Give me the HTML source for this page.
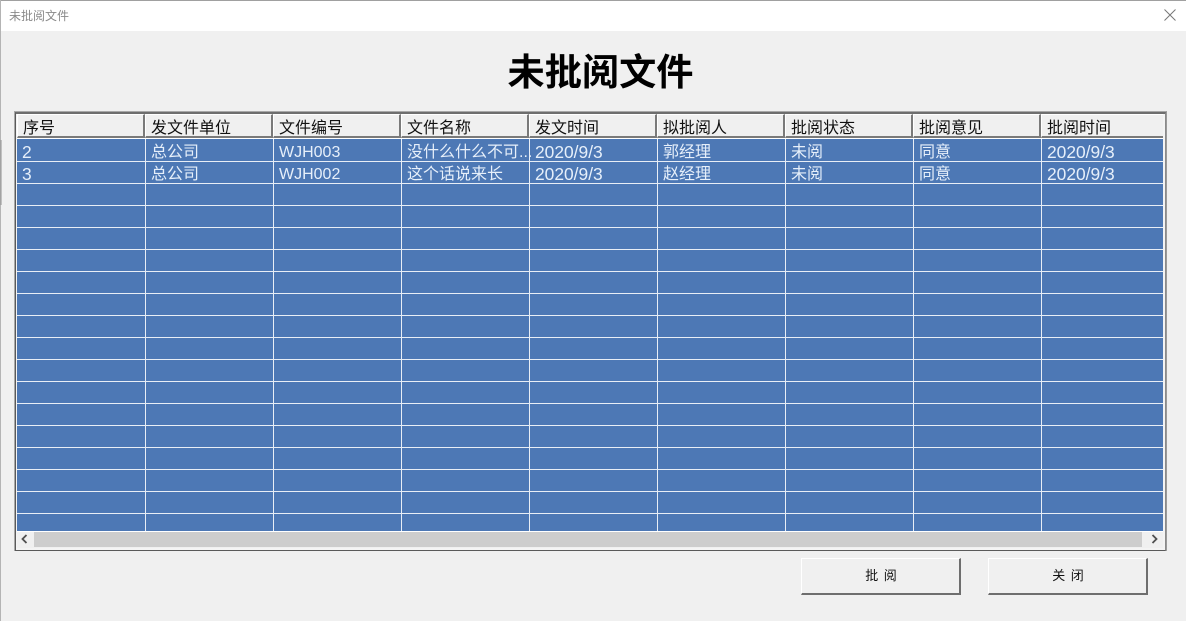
<!DOCTYPE html>
<html><head><meta charset="utf-8">
<style>
html,body{margin:0;padding:0;width:1186px;height:621px;overflow:hidden;background:#f0f0f0}
*{box-sizing:border-box}
body{position:relative;font-family:"Liberation Sans","Noto Sans CJK SC",sans-serif}
div{position:absolute}
.c{white-space:nowrap;font-size:16px;line-height:22px;height:22px}
.h{color:#111}
.d{color:#e6effa}
.t{font-size:17.4px;margin-top:-1px}
.hl{left:17px;width:1146px;height:1px;background:#e8eef6}
.vl{top:139px;width:1px;height:392px;background:#e8eef6}
.hc{top:114px;height:24px;background:#f0f0f0;border-right:2px solid #7a7a7a;border-bottom:2px solid #7a7a7a;border-left:1px solid #fff;border-top:1px solid #fff}
</style></head>
<body>
<!-- window chrome -->
<div style="left:0;top:0;width:1186px;height:1px;background:#a0a0a0"></div>
<div style="left:0;top:0;width:1px;height:621px;background:#b4b4b4"></div>
<div style="left:1px;top:1px;width:1185px;height:30px;background:#fff"></div>
<div class="c" style="left:9px;top:5px;font-size:12px;color:#8a8a8a">未批阅文件</div>
<svg style="position:absolute;left:1164px;top:9px" width="12" height="12" viewBox="0 0 12 12"><path d="M0.5 0.5L11.5 11.5M11.5 0.5L0.5 11.5" stroke="#777" stroke-width="1" fill="none"/></svg>
<div style="left:0;top:140px;width:2px;height:65px;background:#8f8f8f;opacity:.5"></div>
<!-- title -->
<div style="left:500px;top:47px;width:201px;text-align:center;font-size:37.2px;line-height:50px;font-weight:bold;color:#000;white-space:nowrap">未批阅文件</div>
<!-- grid frame -->
<div style="left:14px;top:111px;width:1153px;height:440px;background:#fff;border:1px solid #a8a8a8;border-right-color:#9a9a9a"></div>
<div style="left:15px;top:112px;width:1151px;height:439px;border:2px solid #6e6e6e;border-right:1px solid #8a8a8a;border-bottom:1px solid #5a5a5a;border-left:1px solid #5a5a5a;background:#f4f4f4"></div>
<div style="left:17px;top:139px;width:1146px;height:392px;background:#4d78b5"></div>
<!-- header cells -->
<div class="hc" style="left:17px;width:128px"></div>
<div class="hc" style="left:145px;width:128px"></div>
<div class="hc" style="left:273px;width:128px"></div>
<div class="hc" style="left:401px;width:128px"></div>
<div class="hc" style="left:529px;width:128px"></div>
<div class="hc" style="left:657px;width:128px"></div>
<div class="hc" style="left:785px;width:128px"></div>
<div class="hc" style="left:913px;width:128px"></div>
<div class="hc" style="left:1041px;width:122px;border-right:0"></div>
<div style="left:17px;top:138px;width:1146px;height:1px;background:#fff"></div>
<!-- header text -->
<div class="c h" style="left:23px;top:118px">序号</div>
<div class="c h" style="left:151px;top:118px">发文件单位</div>
<div class="c h" style="left:279px;top:118px">文件编号</div>
<div class="c h" style="left:407px;top:118px">文件名称</div>
<div class="c h" style="left:535px;top:118px">发文时间</div>
<div class="c h" style="left:663px;top:118px">拟批阅人</div>
<div class="c h" style="left:791px;top:118px">批阅状态</div>
<div class="c h" style="left:919px;top:118px">批阅意见</div>
<div class="c h" style="left:1047px;top:118px">批阅时间</div>
<!-- row lines -->
<div class="hl" style="top:161px"></div><div class="hl" style="top:183px"></div><div class="hl" style="top:205px"></div><div class="hl" style="top:227px"></div><div class="hl" style="top:249px"></div><div class="hl" style="top:271px"></div><div class="hl" style="top:293px"></div><div class="hl" style="top:315px"></div><div class="hl" style="top:337px"></div><div class="hl" style="top:359px"></div><div class="hl" style="top:381px"></div><div class="hl" style="top:403px"></div><div class="hl" style="top:425px"></div><div class="hl" style="top:447px"></div><div class="hl" style="top:469px"></div><div class="hl" style="top:491px"></div><div class="hl" style="top:513px"></div><div class="hl" style="top:531px;background:#fff"></div>
<!-- col lines -->
<div class="vl" style="left:145px"></div><div class="vl" style="left:273px"></div><div class="vl" style="left:401px"></div><div class="vl" style="left:529px"></div><div class="vl" style="left:657px"></div><div class="vl" style="left:785px"></div><div class="vl" style="left:913px"></div><div class="vl" style="left:1041px"></div>
<!-- row 1 -->
<div class="c d t" style="left:22px;top:142px">2</div>
<div class="c d" style="left:151px;top:142px">总公司</div>
<div class="c d" style="left:279px;top:142px">WJH003</div>
<div class="c d" style="left:407px;top:142px">没什么什么不可...</div>
<div class="c d t" style="left:535px;top:142px">2020/9/3</div>
<div class="c d" style="left:663px;top:142px">郭经理</div>
<div class="c d" style="left:791px;top:142px">未阅</div>
<div class="c d" style="left:919px;top:142px">同意</div>
<div class="c d t" style="left:1047px;top:142px">2020/9/3</div>
<!-- row 2 -->
<div class="c d t" style="left:22px;top:164px">3</div>
<div class="c d" style="left:151px;top:164px">总公司</div>
<div class="c d" style="left:279px;top:164px">WJH002</div>
<div class="c d" style="left:407px;top:164px">这个话说来长</div>
<div class="c d t" style="left:535px;top:164px">2020/9/3</div>
<div class="c d" style="left:663px;top:164px">赵经理</div>
<div class="c d" style="left:791px;top:164px">未阅</div>
<div class="c d" style="left:919px;top:164px">同意</div>
<div class="c d t" style="left:1047px;top:164px">2020/9/3</div>
<!-- scrollbar -->
<div style="left:17px;top:532px;width:1146px;height:16px;background:#f0f0f0"></div>
<div style="left:34px;top:532px;width:1108px;height:15px;background:#cdcdcd"></div>
<svg style="position:absolute;left:21px;top:534px" width="7" height="10" viewBox="0 0 7 10"><path d="M5.5 1L1.5 5L5.5 9" stroke="#505050" stroke-width="1.8" fill="none"/></svg>
<svg style="position:absolute;left:1151px;top:534px" width="7" height="10" viewBox="0 0 7 10"><path d="M1.5 1L5.5 5L1.5 9" stroke="#505050" stroke-width="1.8" fill="none"/></svg>
<!-- buttons -->
<div style="left:801px;top:558px;width:160px;height:37px;background:#f0f0f0;border:1px solid #fff;border-right:2px solid #6e6e6e;border-bottom:2px solid #6e6e6e"></div>
<div class="c" style="left:801px;top:565px;width:160px;text-align:center;font-size:13px;word-spacing:2px;color:#111">批 阅</div>
<div style="left:988px;top:558px;width:160px;height:37px;background:#f0f0f0;border:1px solid #fff;border-right:2px solid #6e6e6e;border-bottom:2px solid #6e6e6e"></div>
<div class="c" style="left:988px;top:565px;width:160px;text-align:center;font-size:13px;word-spacing:2px;color:#111">关 闭</div>
</body></html>
